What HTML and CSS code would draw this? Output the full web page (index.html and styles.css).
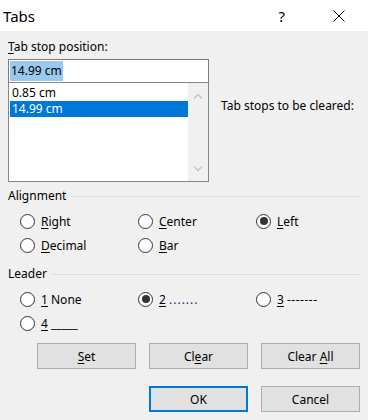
FILE: index.html
```html
<!DOCTYPE html>
<html lang="en">
<head>
    <meta charset="UTF-8">
    <title>Tabs</title>
    <link rel="stylesheet" href="styles.css">
</head>
<body>
    <div class="titlebar">
        <span class="title">Tabs</span>
        <span class="help">?</span>
        <svg class="close" width="12" height="12" viewBox="0 0 12 12">
            <path d="M0.5 0.5 L11.5 11.5 M11.5 0.5 L0.5 11.5" stroke="#000" stroke-width="1" fill="none"/>
        </svg>
    </div>

    <div class="content">
        <div class="top-row">
            <div class="stop-col">
                <div class="label"><u>T</u>ab stop position:</div>
                <div class="input"><span class="selected-text">14.99 cm</span></div>
                <div class="listbox">
                    <div class="items">
                        <div class="item">0.85 cm</div>
                        <div class="item active">14.99 cm</div>
                    </div>
                    <div class="scrollbar">
                        <svg width="10" height="6" viewBox="0 0 10 6"><path d="M1 5.5 L5 1.5 L9 5.5" stroke="#c4c4c4" stroke-width="1.5" fill="none"/></svg>
                        <svg width="10" height="6" viewBox="0 0 10 6"><path d="M1 0.5 L5 4.5 L9 0.5" stroke="#c4c4c4" stroke-width="1.5" fill="none"/></svg>
                    </div>
                </div>
            </div>
            <div class="cleared">Tab stops to be cleared:</div>
        </div>

        <div class="section-head">Alignment</div>
        <div class="radio-grid">
            <div class="option"><span class="radio"></span><span><u>R</u>ight</span></div>
            <div class="option"><span class="radio"></span><span><u>C</u>enter</span></div>
            <div class="option"><span class="radio checked"></span><span><u>L</u>eft</span></div>
            <div class="option"><span class="radio"></span><span><u>D</u>ecimal</span></div>
            <div class="option"><span class="radio"></span><span><u>B</u>ar</span></div>
        </div>

        <div class="section-head leader-head">Leader</div>
        <div class="radio-grid">
            <div class="option"><span class="radio"></span><span><u>1</u> None</span></div>
            <div class="option"><span class="radio checked"></span><span><u>2</u> <span class="dots">.......</span></span></div>
            <div class="option"><span class="radio"></span><span><u>3</u> <span class="dashes">-------</span></span></div>
            <div class="option"><span class="radio"></span><span><u>4</u> <span class="line">_____</span></span></div>
        </div>

        <div class="button-row">
            <button><u>S</u>et</button>
            <button>Cl<u>e</u>ar</button>
            <button>Clear <u>A</u>ll</button>
        </div>
        <div class="button-row second">
            <button class="default">OK</button>
            <button>Cancel</button>
        </div>
    </div>
</body>
</html>
```

FILE: styles.css
```css
/* Dialog frame */
body {
    margin: 0;
    width: 368px;
    height: 420px;
    background-color: #f0f0f0;
    font-family: "Noto Sans", "Open Sans", sans-serif;
    font-size: 12px;
    color: #000;
    overflow: hidden;
}

u {
    text-decoration: underline;
    text-underline-offset: 2px;
    text-decoration-thickness: 1px;
}

/* Title bar */
.titlebar {
    height: 31px;
    background-color: #ffffff;
    display: flex;
    align-items: center;
    font-size: 15px;
}

.title {
    margin-left: 3px;
    flex: 1;
}

.help {
    margin-right: 48px;
}

.close {
    margin-right: 23px;
}

/* Content */
.content {
    padding: 8px 8px 0 8px;
}

.top-row {
    display: flex;
}

.stop-col {
    width: 201px;
}

.label {
    height: 16px;
    line-height: 16px;
    margin-bottom: 4px;
}

.input {
    height: 24px;
    box-sizing: border-box;
    border: 1px solid #7a7a7a;
    background-color: #ffffff;
    padding: 1px 1px;
    line-height: 20px;
}

.selected-text {
    background-color: #99c9ef;
    display: inline-block;
    padding: 0 1px;
}

.listbox {
    height: 100px;
    box-sizing: border-box;
    margin-top: -1px;
    border: 1px solid #828790;
    background-color: #ffffff;
    display: flex;
}

.items {
    flex: 1;
    padding: 2px 0 0 1px;
}

.item {
    height: 16px;
    line-height: 16px;
    padding-left: 2px;
}

.item.active {
    background-color: #0078d7;
    color: #ffffff;
}

.scrollbar {
    width: 20px;
    background-color: #f0f0f0;
    display: flex;
    flex-direction: column;
    justify-content: space-between;
    align-items: center;
    padding: 10px 0 9px 0;
}

.cleared {
    margin-left: 12px;
    margin-top: 59px;
    line-height: 16px;
    height: 16px;
}

/* Group headings */
.section-head {
    display: flex;
    align-items: center;
    height: 16px;
    line-height: 16px;
    margin-top: 6px;
}

.section-head::after {
    content: "";
    flex: 1;
    height: 1px;
    background-color: #dcdcdc;
    margin-left: 5px;
}

.leader-head {
    margin-top: 9px;
}

/* Radio buttons */
.radio-grid {
    display: grid;
    grid-template-columns: 118px 118px 1fr;
    grid-auto-rows: 24px;
    margin: 5px 0 0 12px;
}

.option {
    display: flex;
    align-items: center;
    gap: 6px;
}

.radio {
    width: 15px;
    height: 15px;
    box-sizing: border-box;
    border: 1px solid #333333;
    border-radius: 50%;
    background-color: #ffffff;
    display: flex;
    align-items: center;
    justify-content: center;
}

.radio.checked::after {
    content: "";
    width: 8px;
    height: 8px;
    border-radius: 50%;
    background-color: #333333;
}

.dots {
    color: #1a2f6a;
    letter-spacing: 1px;
}

.dashes {
    letter-spacing: 0.5px;
}

/* Buttons */
.button-row {
    display: flex;
    justify-content: flex-end;
    gap: 13px;
    margin-top: 8px;
}

.button-row.second {
    margin-top: 17px;
}

button {
    width: 99px;
    height: 26px;
    box-sizing: border-box;
    background-color: #e1e1e1;
    border: 1px solid #adadad;
    font-family: inherit;
    font-size: 12px;
    color: #000;
    padding: 0;
}

button.default {
    border: 2px solid #0078d7;
}
```
